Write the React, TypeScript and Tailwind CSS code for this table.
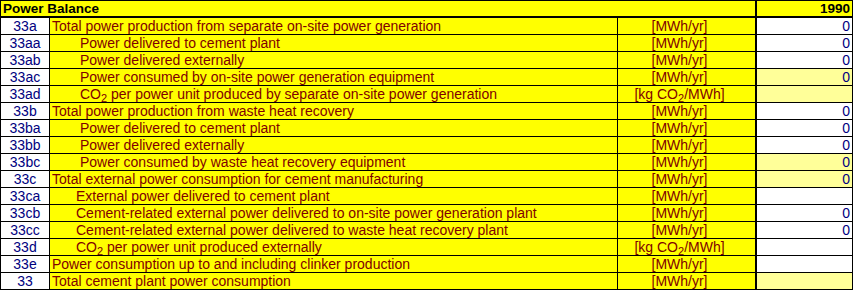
type Row = {
  id: string;
  text: string;
  indent: 0 | 1 | 2;
  unit: 'mwh' | 'co2';
  value: string;
  light?: boolean;
  co2?: boolean;
};

const rows: Row[] = [
  { id: '33a', text: 'Total power production from separate on-site power generation', indent: 0, unit: 'mwh', value: '0' },
  { id: '33aa', text: 'Power delivered to cement plant', indent: 2, unit: 'mwh', value: '0' },
  { id: '33ab', text: 'Power delivered externally', indent: 2, unit: 'mwh', value: '0' },
  { id: '33ac', text: 'Power consumed by on-site power generation equipment', indent: 2, unit: 'mwh', value: '0', light: true },
  { id: '33ad', text: ' per power unit produced by separate on-site power generation', indent: 2, unit: 'co2', value: '', light: true, co2: true },
  { id: '33b', text: 'Total power production from waste heat recovery', indent: 0, unit: 'mwh', value: '0' },
  { id: '33ba', text: 'Power delivered to cement plant', indent: 2, unit: 'mwh', value: '0' },
  { id: '33bb', text: 'Power delivered externally', indent: 2, unit: 'mwh', value: '0' },
  { id: '33bc', text: 'Power consumed by waste heat recovery equipment', indent: 2, unit: 'mwh', value: '0', light: true },
  { id: '33c', text: 'Total external power consumption for cement manufacturing', indent: 0, unit: 'mwh', value: '0', light: true },
  { id: '33ca', text: 'External power delivered to cement plant', indent: 1, unit: 'mwh', value: '' },
  { id: '33cb', text: 'Cement-related external power delivered to on-site power generation plant', indent: 1, unit: 'mwh', value: '0' },
  { id: '33cc', text: 'Cement-related external power delivered to waste heat recovery plant', indent: 1, unit: 'mwh', value: '0' },
  { id: '33d', text: ' per power unit produced externally', indent: 1, unit: 'co2', value: '', co2: true },
  { id: '33e', text: 'Power consumption up to and including clinker production', indent: 0, unit: 'mwh', value: '' },
  { id: '33', text: 'Total cement plant power consumption', indent: 0, unit: 'mwh', value: '', light: true },
];

function Sub() {
  return <span className="relative top-[3px] text-[11px] leading-none">2</span>;
}

export default function App() {
  return (
    <div className="w-[853px] h-[291px] bg-white text-[14px] leading-[16px] text-[#800000] font-['Liberation_Sans',Arial,sans-serif]">
      {/* header */}
      <div className="flex h-[18px] border-t border-b-2 border-l border-black bg-[#ffff00] text-black font-bold text-[13.5px]">
        <div className="w-[756px] border-r-2 border-black pl-[2px] leading-[15px]">Power Balance</div>
        <div className="w-[96px] border-r border-black pr-[2px] text-right leading-[15px]">1990</div>
      </div>

      {rows.map(r => (
        <div key={r.id} className="flex h-[17px] border-b border-l border-black">
          <div className="w-[49px] border-r border-black bg-white text-center text-[#000080]">{r.id}</div>
          <div
            className={
              'w-[568px] border-r border-black bg-[#ffff00] whitespace-nowrap ' +
              (r.indent === 0 ? 'pl-[2px]' : r.indent === 1 ? 'pl-[26px]' : 'pl-[30px]')
            }
          >
            {r.co2 ? (
              <>
                CO<Sub />
                {r.text}
              </>
            ) : (
              r.text
            )}
          </div>
          <div className="w-[139px] border-r-2 border-black bg-[#ffff00] pr-[14px] text-center whitespace-nowrap">
            {r.unit === 'co2' ? (
              <>
                [kg CO<Sub />/MWh]
              </>
            ) : (
              '[MWh/yr]'
            )}
          </div>
          <div
            className={
              'w-[96px] border-r border-black pr-[2px] text-right text-[#000080] ' +
              (r.light ? 'bg-[#ffff99]' : 'bg-white')
            }
          >
            {r.value}
          </div>
        </div>
      ))}
    </div>
  );
}
